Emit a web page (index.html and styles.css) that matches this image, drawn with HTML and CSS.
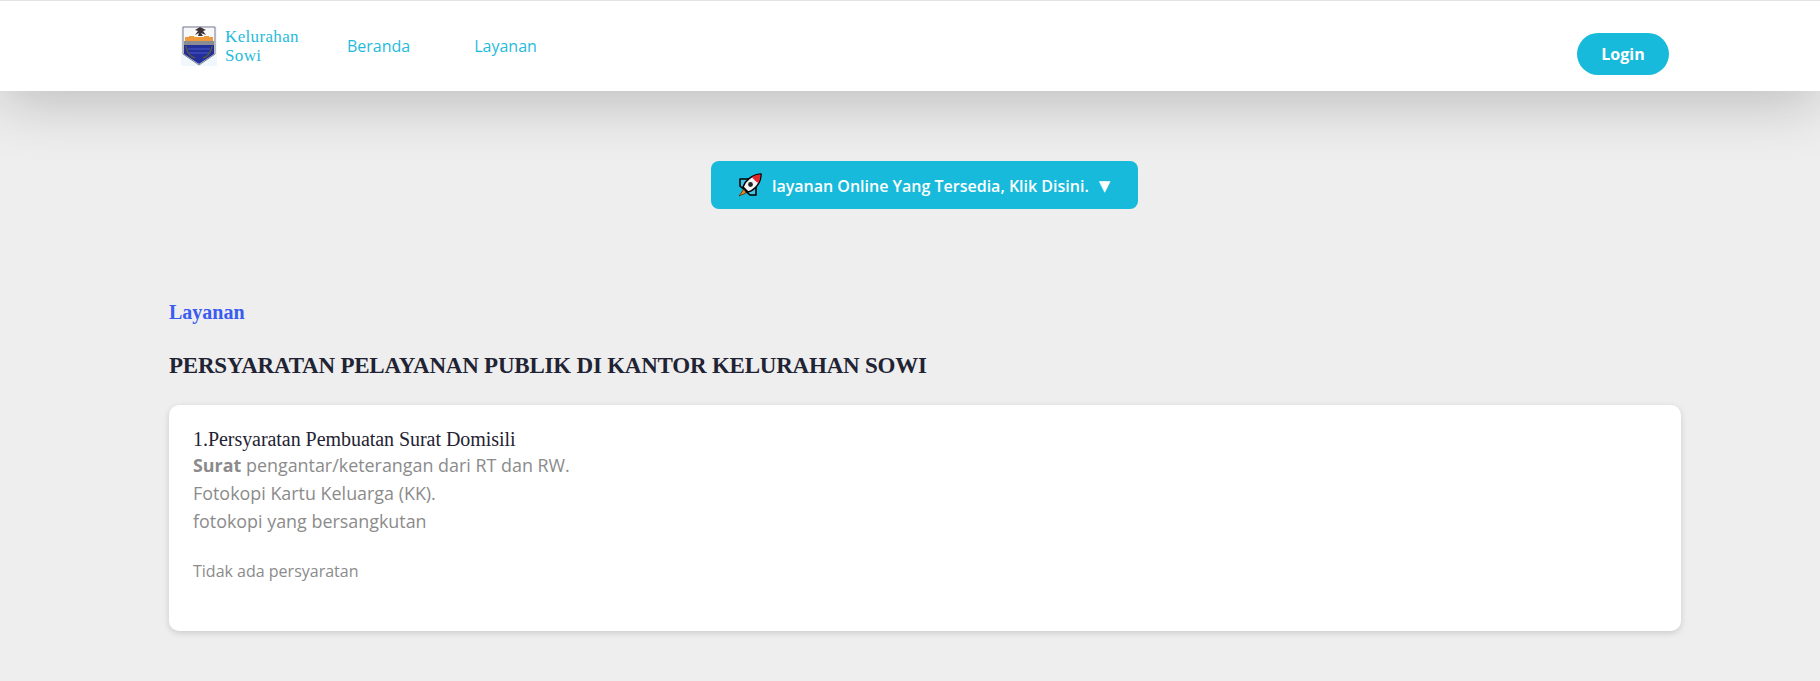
FILE: index.html
```html
<!DOCTYPE html>
<html lang="id">
<head>
    <meta charset="UTF-8">
    <meta name="viewport" content="width=device-width, initial-scale=1.0">
    <title>Kelurahan Sowi</title>
    <link rel="stylesheet" href="styles.css">
</head>
<body>
    <header class="navbar">
        <div class="navbar-inner">
            <a class="brand" href="#">
                <svg class="brand-logo" viewBox="0 0 36 40" aria-hidden="true">
                    <rect width="36" height="40" fill="#f0f8fd"/>
                    <path d="M2 1H34V28L18 39L2 28Z" fill="#f8f8f8" stroke="#77798a" stroke-width="1"/>
                    <path d="M19 1L14 4L17 5L14 9L18 7L17 10H22L20 7L25 9L22 5L25 4Z" fill="#3a3038"/>
                    <path d="M4 15V11H8V10H13V11H23V10H28V11H32V15Z" fill="#ee9a3c"/>
                    <rect x="3" y="15" width="30" height="4" fill="#8a8c92"/>
                    <path d="M3 19H33V28L18 38L3 28Z" fill="#232f9a"/>
                    <path d="M7 23H29M8 27H28" stroke="#3f4dbb" stroke-width="1.5"/>
                    <path d="M5 20C6 27 10 31 14 32M31 20C30 27 26 31 22 32" fill="none" stroke="#5b5a3a" stroke-width="1.5"/>
                </svg>
                <span class="brand-name">Kelurahan<br>Sowi</span>
            </a>
            <nav class="nav-links">
                <a href="#">Beranda</a>
                <a href="#">Layanan</a>
            </nav>
            <a class="btn-login" href="#">Login</a>
        </div>
    </header>

    <div class="online-row">
        <button class="btn-online">
            <svg class="rocket" viewBox="0 0 24 24" aria-hidden="true">
                <path d="M2 6H10L18 14V22H12L2 13Z" fill="#45c4e4" stroke="#000" stroke-width="1.6" stroke-linejoin="round"/>
                <path d="M6 16L1 23L8 20Z" fill="#f08a24" stroke="#5a2a00" stroke-width="0.8"/>
                <path d="M5 14C7 8 13 2 23 1C23 10 17 17 10 19Z" fill="#f4f4f4" stroke="#000" stroke-width="1.6" stroke-linejoin="round"/>
                <path d="M14 4C17 2 20 1.5 22.5 1.5C22.5 4 22 7 20.5 10C18 9 15.5 6.5 14 4Z" fill="#e3262e"/>
                <circle cx="12.5" cy="11.5" r="2.4" fill="#222"/>
            </svg>
            <span class="online-text">layanan Online Yang Tersedia, Klik Disini.</span>
            <span class="caret">▼</span>
        </button>
    </div>

    <main class="content">
        <p class="section-label">Layanan</p>
        <h1 class="section-title">PERSYARATAN PELAYANAN PUBLIK DI KANTOR KELURAHAN SOWI</h1>
        <section class="card">
            <h2 class="card-title">1.Persyaratan Pembuatan Surat Domisili</h2>
            <p class="card-line"><strong>Surat</strong> pengantar/keterangan dari RT dan RW.</p>
            <p class="card-line">Fotokopi Kartu Keluarga (KK).</p>
            <p class="card-line">fotokopi yang bersangkutan</p>
            <p class="card-note">Tidak ada persyaratan</p>
        </section>
    </main>
</body>
</html>
```

FILE: styles.css
```css
* {
    box-sizing: border-box;
}
body {
    margin: 0;
    min-height: 100vh;
    background: #eeeeee;
    font-family: "Open Sans", Arial, sans-serif;
    overflow: hidden;
}
a {
    text-decoration: none;
}
p, h1, h2 {
    margin: 0;
}
.navbar {
    height: 91px;
    background: #fff;
    border-top: 1px solid #e3e3e3;
    box-shadow: 0 10px 60px rgba(0, 0, 0, 0.22);
}
.navbar-inner {
    width: 1512px;
    margin-left: 169px;
    padding: 25px 12px 0;
    display: flex;
    align-items: flex-start;
}
.brand {
    display: flex;
    align-items: center;
    gap: 8px;
    color: #1fbbdc;
}
.brand-logo {
    width: 36px;
    height: 40px;
    flex: none;
    filter: blur(0.4px);
}
.brand-name {
    font-family: "Liberation Serif", serif;
    font-size: 17px;
    line-height: 19px;
    letter-spacing: 0.35px;
}
.nav-links {
    display: flex;
    gap: 64px;
    margin-left: 48px;
    padding-top: 10px;
}
.nav-links a {
    color: #1fbbdc;
    font-size: 16px;
    line-height: 20px;
}
.btn-login {
    margin-left: auto;
    margin-top: 7px;
    width: 92px;
    height: 42px;
    border-radius: 21px;
    background: #17badb;
    color: #fff;
    font-size: 16px;
    font-weight: 700;
    line-height: 42px;
    text-align: center;
}
.online-row {
    display: flex;
    justify-content: center;
    padding-top: 70px;
    padding-left: 29px;
}
.btn-online {
    width: 427px;
    height: 48px;
    display: flex;
    align-items: center;
    padding: 0 0 0 27px;
    border: 0;
    border-radius: 8px;
    background: #17badb;
    color: #fff;
    font-family: inherit;
    font-size: 16px;
    font-weight: 600;
}
.online-text {
    padding-top: 2px;
}
.rocket {
    width: 24px;
    height: 24px;
    margin-right: 10px;
}
.caret {
    margin-left: 10px;
    padding-top: 1px;
    font-family: "DejaVu Sans", sans-serif;
    font-size: 15px;
}
.content {
    width: 1512px;
    margin-left: 169px;
    padding-top: 90px;
}
.section-label {
    color: #3a5cf0;
    font-family: "Liberation Serif", serif;
    font-size: 20px;
    font-weight: 700;
    line-height: 26px;
}
.section-title {
    margin-top: 27px;
    color: #1f2333;
    font-family: "Liberation Serif", serif;
    font-size: 23px;
    font-weight: 700;
    line-height: 28px;
    letter-spacing: -0.22px;
}
.card {
    height: 226px;
    margin-top: 25px;
    padding: 23px 24px 0;
    background: #fff;
    border-radius: 10px;
    box-shadow: 0 2px 6px rgba(0, 0, 0, 0.15);
}
.card-title {
    color: #1f2333;
    font-family: "Liberation Serif", serif;
    font-size: 20px;
    font-weight: 400;
    line-height: 23px;
    letter-spacing: -0.05px;
}
.card-line {
    color: #8b8b8b;
    font-size: 17.9px;
    line-height: 28px;
}
.card-line strong {
    font-weight: 700;
}
.card-note {
    margin-top: 22px;
    color: #8b8b8b;
    font-size: 16px;
    line-height: 28px;
}
```
